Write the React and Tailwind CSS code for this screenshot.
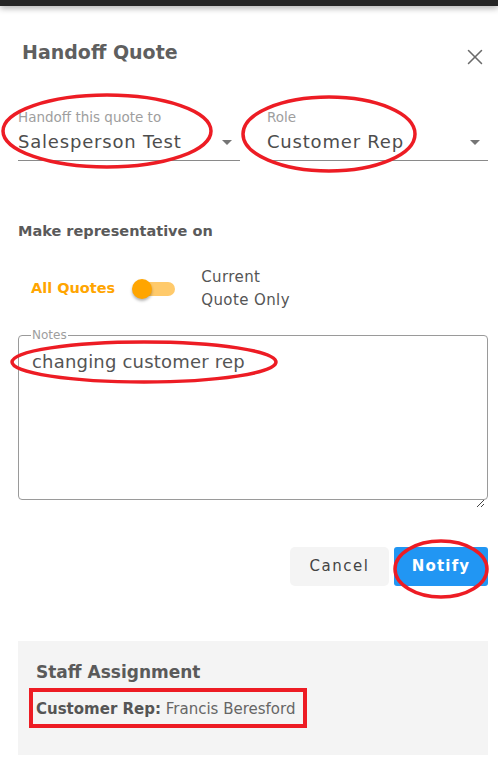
import { X } from "lucide-react";

function Field({ label, value, className }) {
  return (
    <div className={`flex flex-col ${className}`}>
      <span className="text-[13.5px] leading-[16px] text-[#9e9e9e]">{label}</span>
      <div className="mt-[5px] flex items-center justify-between border-b border-[#8a8a8a] pb-[6px]">
        <span className="text-[18px] leading-[24px] tracking-[0.8px] text-[#4d4d4d]">{value}</span>
        <svg width="10" height="5" viewBox="0 0 10 5" className="mr-[8px]">
          <path d="M0 0h10L5 5z" fill="#757575" />
        </svg>
      </div>
    </div>
  );
}

function Annotations() {
  return (
    <svg
      className="pointer-events-none absolute left-0 top-0"
      width="498"
      height="767"
      viewBox="0 0 498 767"
      fill="none"
      stroke="#ed1c24"
    >
      <ellipse cx="107" cy="131" rx="104" ry="36" strokeWidth="3.5" />
      <ellipse cx="329" cy="134" rx="86" ry="37" strokeWidth="3.5" />
      <ellipse cx="144" cy="362" rx="132" ry="20" strokeWidth="3.5" />
      <ellipse cx="441" cy="569" rx="46" ry="28" strokeWidth="3.5" />
      <rect x="31" y="690" width="274" height="36" strokeWidth="4" />
    </svg>
  );
}

export default function App() {
  return (
    <div className="relative h-[767px] w-[498px] overflow-hidden bg-white font-['DejaVu_Sans',sans-serif]">
      <div className="h-[6px] bg-[#262626] shadow-[0_2px_6px_rgba(0,0,0,0.35)]" />

      <div className="flex items-start justify-between pl-[22px] pr-[10px] pt-[32px]">
        <h2 className="text-[19px] font-bold leading-[28px] text-[#5f5f5f]">Handoff Quote</h2>
        <X className="mt-[6px] h-[26px] w-[26px] text-[#6b6b6b]" strokeWidth={1.4} />
      </div>

      <div className="mt-[39px] flex gap-[27px] pl-[18px] pr-[10px]">
        <Field label="Handoff this quote to" value="Salesperson Test" className="w-[222px]" />
        <Field label="Role" value="Customer Rep" className="flex-1" />
      </div>

      <p className="mt-[60px] pl-[18px] text-[14.5px] font-bold leading-[20px] text-[#5a5a5a]">
        Make representative on
      </p>

      <div className="mt-[25px] flex items-center pl-[31px]">
        <span className="text-[14.5px] font-bold text-[#ffa500]">All Quotes</span>
        <div className="relative ml-[17px] h-[14px] w-[43px]">
          <div className="absolute left-[10px] top-0 h-[14px] w-[33px] rounded-full bg-[#ffca6b]" />
          <div className="absolute left-0 top-[-3px] h-[20px] w-[20px] rounded-full bg-[#ffa500] shadow-[0_2px_3px_rgba(0,0,0,0.3)]" />
        </div>
        <span className="ml-[26px] text-[15px] leading-[23px] tracking-[0.4px] text-[#555555]">
          Current
          <br />
          Quote Only
        </span>
      </div>

      <fieldset className="ml-[18px] mr-[10px] mt-[18px] h-[170px] rounded-[4px] border border-[#9a9a9a] px-[13px] pb-[10px]">
        <legend className="ml-[-1px] px-[1px] text-[12px] leading-[10px] text-[#9e9e9e]">Notes</legend>
        <div className="relative h-full">
          <p className="mt-[11px] text-[18px] leading-[22px] tracking-[0.2px] text-[#555555]">changing customer rep</p>
          <svg width="9" height="9" viewBox="0 0 9 9" className="absolute bottom-[-8px] right-[-11px]">
            <path d="M8 1L1 8M8 5L5 8" stroke="#444" strokeWidth="1" />
          </svg>
        </div>
      </fieldset>

      <div className="mt-[47px] flex justify-end gap-[5px] pr-[10px]">
        <button
          type="button"
          className="h-[39px] w-[99px] rounded-[5px] bg-[#f4f4f4] text-[15px] tracking-[1.5px] text-[#444444]"
        >
          Cancel
        </button>
        <button
          type="button"
          className="h-[39px] w-[94px] rounded-[3px] bg-[#2196f3] text-[15px] font-bold tracking-[1.2px] text-white"
        >
          Notify
        </button>
      </div>

      <div className="ml-[18px] mr-[10px] mt-[55px] h-[114px] bg-[#f4f4f4] px-[18px] pt-[20px]">
        <h3 className="text-[17px] font-bold leading-[22px] text-[#5a5a5a]">Staff Assignment</h3>
        <p className="mt-[16px] text-[15px] leading-[20px] text-[#666666]">
          <span className="font-bold text-[#555555]">Customer Rep:</span> Francis Beresford
        </p>
      </div>

      <Annotations />
    </div>
  );
}
